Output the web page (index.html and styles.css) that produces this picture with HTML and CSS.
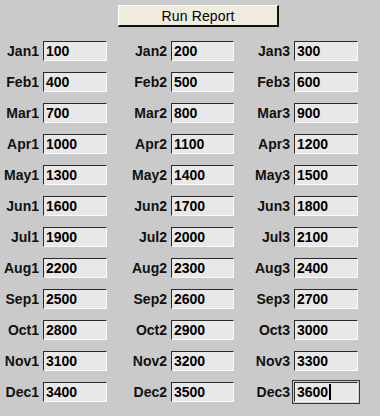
FILE: index.html
```html
<!DOCTYPE html>
<html>
<head>
<meta charset="utf-8">
<link rel="stylesheet" href="styles.css">
</head>
<body>
<div class="panel">
  <div class="toolbar"><button class="btn" type="button">Run Report</button></div>
  <div class="grid">
    <span class="lbl">Jan1</span><div class="fld">100</div>
    <span class="lbl">Jan2</span><div class="fld">200</div>
    <span class="lbl">Jan3</span><div class="fld">300</div>
    <span class="lbl">Feb1</span><div class="fld">400</div>
    <span class="lbl">Feb2</span><div class="fld">500</div>
    <span class="lbl">Feb3</span><div class="fld">600</div>
    <span class="lbl">Mar1</span><div class="fld">700</div>
    <span class="lbl">Mar2</span><div class="fld">800</div>
    <span class="lbl">Mar3</span><div class="fld">900</div>
    <span class="lbl">Apr1</span><div class="fld">1000</div>
    <span class="lbl">Apr2</span><div class="fld">1100</div>
    <span class="lbl">Apr3</span><div class="fld">1200</div>
    <span class="lbl">May1</span><div class="fld">1300</div>
    <span class="lbl">May2</span><div class="fld">1400</div>
    <span class="lbl">May3</span><div class="fld">1500</div>
    <span class="lbl">Jun1</span><div class="fld">1600</div>
    <span class="lbl">Jun2</span><div class="fld">1700</div>
    <span class="lbl">Jun3</span><div class="fld">1800</div>
    <span class="lbl">Jul1</span><div class="fld">1900</div>
    <span class="lbl">Jul2</span><div class="fld">2000</div>
    <span class="lbl">Jul3</span><div class="fld">2100</div>
    <span class="lbl">Aug1</span><div class="fld">2200</div>
    <span class="lbl">Aug2</span><div class="fld">2300</div>
    <span class="lbl">Aug3</span><div class="fld">2400</div>
    <span class="lbl">Sep1</span><div class="fld">2500</div>
    <span class="lbl">Sep2</span><div class="fld">2600</div>
    <span class="lbl">Sep3</span><div class="fld">2700</div>
    <span class="lbl">Oct1</span><div class="fld">2800</div>
    <span class="lbl">Oct2</span><div class="fld">2900</div>
    <span class="lbl">Oct3</span><div class="fld">3000</div>
    <span class="lbl">Nov1</span><div class="fld">3100</div>
    <span class="lbl">Nov2</span><div class="fld">3200</div>
    <span class="lbl">Nov3</span><div class="fld">3300</div>
    <span class="lbl">Dec1</span><div class="fld">3400</div>
    <span class="lbl">Dec2</span><div class="fld">3500</div>
    <span class="lbl">Dec3</span><div class="fld focus">3600<span class="caret"></span></div>
  </div>
</div>
</body>
</html>
```
FILE: styles.css
```css
html, body {
  margin: 0;
  padding: 0;
  background: #cacaca;
}
body {
  width: 380px;
  height: 416px;
  font-family: "Liberation Sans", Arial, sans-serif;
  color: #000;
}
.panel {
  display: flex;
  flex-direction: column;
  padding-top: 5px;
}
.toolbar {
  display: flex;
  padding-left: 118px;
}
.btn {
  width: 161px;
  height: 22px;
  margin: 0;
  padding: 0;
  background: #efecdd;
  border-top: 1px solid #ffffff;
  border-left: 1px solid #ffffff;
  border-right: 2px solid #111;
  border-bottom: 2px solid #111;
  font-family: "Liberation Sans", Arial, sans-serif;
  font-size: 14px;
  letter-spacing: 0.15px;
  color: #000;
  line-height: 18px;
}
.grid {
  display: grid;
  grid-template-columns: 43px 64px 64px 63px 60px 64px;
  grid-auto-rows: 20px;
  row-gap: 11px;
  margin-top: 14px;
}
.lbl {
  font-size: 14px;
  font-weight: bold;
  text-align: right;
  padding-right: 4px;
  line-height: 20px;
  color: #111;
}
.fld {
  box-sizing: border-box;
  height: 20px;
  background: #e8e8e8;
  border-top: 1px solid #2a2a2a;
  border-left: 1px solid #2a2a2a;
  border-right: 1px solid #fbfbfb;
  border-bottom: 1px solid #fbfbfb;
  font-size: 14px;
  font-weight: bold;
  line-height: 18px;
  padding-left: 2px;
  color: #000;
  display: flex;
  align-items: center;
}
.focus {
  outline: 1px solid #3a3a3a;
  outline-offset: 1px;
}
.caret {
  display: inline-block;
  width: 2px;
  height: 16px;
  background: #000;
  margin-left: 1px;
}
```
